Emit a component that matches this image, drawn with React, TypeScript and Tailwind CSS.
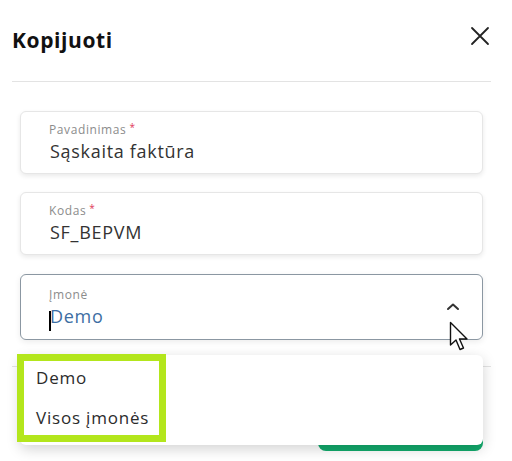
import React from "react";

function Field({ label, value, required, active }: { label: string; value: string; required?: boolean; active?: boolean }) {
  return (
    <div
      className={
        "relative flex flex-col justify-center rounded-md bg-white pl-7 pr-4 " +
        (active
          ? "h-[66px] border border-[#8b97a2] shadow-[0_2px_6px_rgba(0,0,0,0.08)]"
          : "h-[63px] border border-[#e6e6e6] shadow-[0_2px_5px_rgba(0,0,0,0.09)]")
      }
    >
      <div className="text-[12px] leading-[14px] tracking-[0.6px] text-[#8c8c8c]">
        {label}
        {required && <span className="relative -top-[3px] ml-[3px] text-[10px] leading-none text-[#e0395a]">*</span>}
      </div>
      <div className={"mt-[3px] text-[18px] leading-[22px] tracking-[0.7px] " + (active ? "text-[#3d6ea3]" : "text-[#333333]")}>
        {active && <span className="absolute left-[28px] top-[36px] h-[20px] w-[2px] bg-black" />}
        <span className="pl-[1px]">{value}</span>
      </div>
      {active && (
        <svg className="absolute right-[22px] top-[27px]" width="14" height="9" viewBox="0 0 14 9" fill="none">
          <path d="M2 7 L7 2.5 L12 7" stroke="#333" strokeWidth="2" strokeLinecap="round" strokeLinejoin="round" />
        </svg>
      )}
    </div>
  );
}

export default function App() {
  return (
    <div className="relative h-[461px] w-[512px] overflow-hidden bg-white" style={{ fontFamily: "'Open Sans', 'Noto Sans', sans-serif" }}>
      <div className="ml-3 w-[479px]">
        <div className="flex h-[81px] items-center justify-between">
          <div className="text-[21px] font-bold tracking-[0.6px] text-[#111]">Kopijuoti</div>
          <svg className="-mt-[10px] mr-[1px]" width="20" height="20" viewBox="0 0 20 20" fill="none">
            <path d="M2 2 L18 18 M18 2 L2 18" stroke="#222" strokeWidth="1.8" strokeLinecap="round" />
          </svg>
        </div>
        <div className="h-px bg-[#e3e3e3]" />
        <div className="flex flex-col px-2 pt-[29px]">
          <Field label="Pavadinimas" value="Sąskaita faktūra" required />
          <div className="h-[18px]" />
          <Field label="Kodas" value="SF_BEPVM" required />
          <div className="h-[19px]" />
          <Field label="Įmonė" value="Demo" active />
        </div>
        <div className="mt-[26px] h-px bg-[#e3e3e3]" />
        <div className="flex justify-end px-2 pt-[40px]">
          <div className="h-[44px] w-[165px] rounded-lg bg-[#12ab6d]" />
        </div>
      </div>

      {/* dropdown menu */}
      <div className="absolute left-[20px] top-[355px] flex h-[90px] w-[463px] flex-col rounded-md bg-white shadow-[0_4px_14px_rgba(0,0,0,0.18)]">
        <div className="flex h-[44px] items-center pl-[16px] pt-[2px] text-[17px] tracking-[0.8px] text-[#2b2b2b]">Demo</div>
        <div className="flex h-[38px] items-center pl-[16px] text-[17px] tracking-[0.8px] text-[#2b2b2b]">Visos įmonės</div>
      </div>
      {/* highlight box */}
      <div className="absolute left-[17px] top-[354px] h-[88px] w-[149px] border-[7px] border-[#b3e61c]" />

      {/* mouse pointer */}
      <svg className="absolute left-[449px] top-[321px]" width="22" height="32" viewBox="0 0 22 32" fill="none">
        <path d="M1.5 1.5 L1.5 24 L7 19 L11 28.5 L14.5 27 L10.5 18 L18 18 Z" fill="white" stroke="#111" strokeWidth="1.4" strokeLinejoin="round" />
      </svg>
    </div>
  );
}
